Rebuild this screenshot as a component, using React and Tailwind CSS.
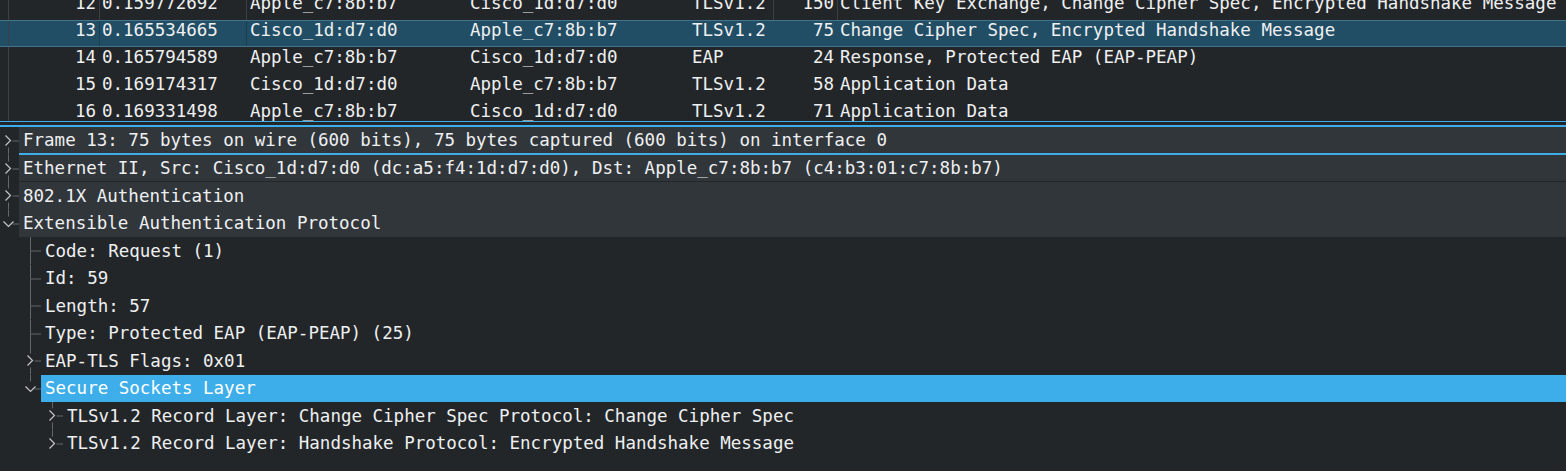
import React from 'react';

const packets = [
  { no: '12', time: '0.159772692', src: 'Apple_c7:8b:b7', dst: 'Cisco_1d:d7:d0', proto: 'TLSv1.2', len: '150', info: 'Client Key Exchange, Change Cipher Spec, Encrypted Handshake Message', grid: true },
  { no: '13', time: '0.165534665', src: 'Cisco_1d:d7:d0', dst: 'Apple_c7:8b:b7', proto: 'TLSv1.2', len: '75', info: 'Change Cipher Spec, Encrypted Handshake Message', selected: true },
  { no: '14', time: '0.165794589', src: 'Apple_c7:8b:b7', dst: 'Cisco_1d:d7:d0', proto: 'EAP', len: '24', info: 'Response, Protected EAP (EAP-PEAP)' },
  { no: '15', time: '0.169174317', src: 'Cisco_1d:d7:d0', dst: 'Apple_c7:8b:b7', proto: 'TLSv1.2', len: '58', info: 'Application Data' },
  { no: '16', time: '0.169331498', src: 'Apple_c7:8b:b7', dst: 'Cisco_1d:d7:d0', proto: 'TLSv1.2', len: '71', info: 'Application Data' },
];

// level, expander (open/closed/null), has next sibling
const tree = [
  { text: 'Frame 13: 75 bytes on wire (600 bits), 75 bytes captured (600 bits) on interface 0', level: 0, exp: 'closed', next: true, first: true, focus: true },
  { text: 'Ethernet II, Src: Cisco_1d:d7:d0 (dc:a5:f4:1d:d7:d0), Dst: Apple_c7:8b:b7 (c4:b3:01:c7:8b:b7)', level: 0, exp: 'closed', next: true, gap: true },
  { text: '802.1X Authentication', level: 0, exp: 'closed', next: true },
  { text: 'Extensible Authentication Protocol', level: 0, exp: 'open', next: false },
  { text: 'Code: Request (1)', level: 1, next: true },
  { text: 'Id: 59', level: 1, next: true },
  { text: 'Length: 57', level: 1, next: true },
  { text: 'Type: Protected EAP (EAP-PEAP) (25)', level: 1, next: true },
  { text: 'EAP-TLS Flags: 0x01', level: 1, exp: 'closed', next: true },
  { text: 'Secure Sockets Layer', level: 1, exp: 'open', next: false, selected: true },
  { text: 'TLSv1.2 Record Layer: Change Cipher Spec Protocol: Change Cipher Spec', level: 2, exp: 'closed', next: true },
  { text: 'TLSv1.2 Record Layer: Handshake Protocol: Encrypted Handshake Message', level: 2, exp: 'closed', next: false },
];

function PacketRow({ p }) {
  const sep = p.grid ? 'border-[#3a3f44]' : p.selected ? 'border-[#1a3f53]' : 'border-transparent';
  const sep2 = p.grid ? 'border-[#3a3f44]' : 'border-transparent';
  const row = p.selected ? 'bg-[#214d65] border-y border-[#44748c]' : '';
  const cell = 'h-full flex items-center pb-[5px] shrink-0';
  return (
    <div className={`flex h-[27px] whitespace-nowrap ${row}`}>
      <div className="w-[9px] h-full border-r border-[#3b4045] shrink-0" />
      <div className={`${cell} w-[91px] justify-end pr-[3px] border-r ${sep}`}>{p.no}</div>
      <div className={`${cell} w-[147px] pl-[2px] border-r ${sep}`}>{p.time}</div>
      <div className={`${cell} w-[220px] pl-[3px]`}>{p.src}</div>
      <div className={`${cell} w-[222px] pl-[3px]`}>{p.dst}</div>
      <div className={`${cell} w-[85px] pl-[3px] border-r ${sep2}`}>{p.proto}</div>
      <div className={`${cell} w-[64px] justify-end pr-[3px] border-r ${sep2}`}>{p.len}</div>
      <div className={`${cell} pl-[2px]`}>{p.info}</div>
    </div>
  );
}

function Gutter({ item }) {
  const H = 27.5;
  const c = 13.5;
  const w = 19 + 22 * item.level;
  const x = 8.5 + 22 * item.level;
  const line = '#63676b';
  const arrow = '#c4c6c8';
  const hasExp = !!item.exp;
  return (
    <svg width={w} height={H} viewBox={`0 0 ${w} ${H}`} className="shrink-0">
      {!item.first && <line x1={x} y1={0} x2={x} y2={hasExp ? c - 7 : c} stroke={line} strokeWidth="1" />}
      {item.next && <line x1={x} y1={hasExp ? c + 7 : c} x2={x} y2={H} stroke={line} strokeWidth="1" />}
      <line x1={hasExp ? x + 4 : x} y1={c + 0.5} x2={x + 11} y2={c + 0.5} stroke={line} strokeWidth="1" />
      {item.exp === 'closed' && (
        <polyline points={`${x - 3},${c - 5} ${x + 2},${c} ${x - 3},${c + 5}`} fill="none" stroke={arrow} strokeWidth="1.2" />
      )}
      {item.exp === 'open' && (
        <polyline points={`${x - 5},${c - 2} ${x},${c + 3} ${x + 5},${c - 2}`} fill="none" stroke={arrow} strokeWidth="1.2" />
      )}
    </svg>
  );
}

function TreeRow({ item }) {
  let bg = '';
  if (item.level === 0) bg = 'bg-[#31363b]';
  if (item.selected) bg = 'bg-[#3daee9] text-white';
  return (
    <div className="flex h-[27.5px] whitespace-nowrap">
      <Gutter item={item} />
      <div className={`flex-1 flex items-center pl-[4px] pt-[1px] ${bg} ${item.focus ? 'border-b-2 border-[#3daee9]' : ''} ${item.gap ? 'border-b border-[#232629]' : ''}`}>
        {item.text}
      </div>
    </div>
  );
}

export default function App() {
  return (
    <div className="w-[1566px] h-[471px] overflow-hidden bg-[#232629] text-[#eff0f1] font-['DejaVu_Sans_Mono',monospace] text-[17.5px] leading-none">
      <div className="h-[121px] overflow-hidden">
        <div className="-mt-[7px]">
          {packets.map((p) => (
            <PacketRow key={p.no} p={p} />
          ))}
        </div>
      </div>
      <div className="h-px bg-[#3daee9]" />
      <div className="h-[3px]" />
      <div className="h-[2px] bg-[#3daee9]" />
      <div>
        {tree.map((item, i) => (
          <TreeRow key={i} item={item} />
        ))}
      </div>
    </div>
  );
}
